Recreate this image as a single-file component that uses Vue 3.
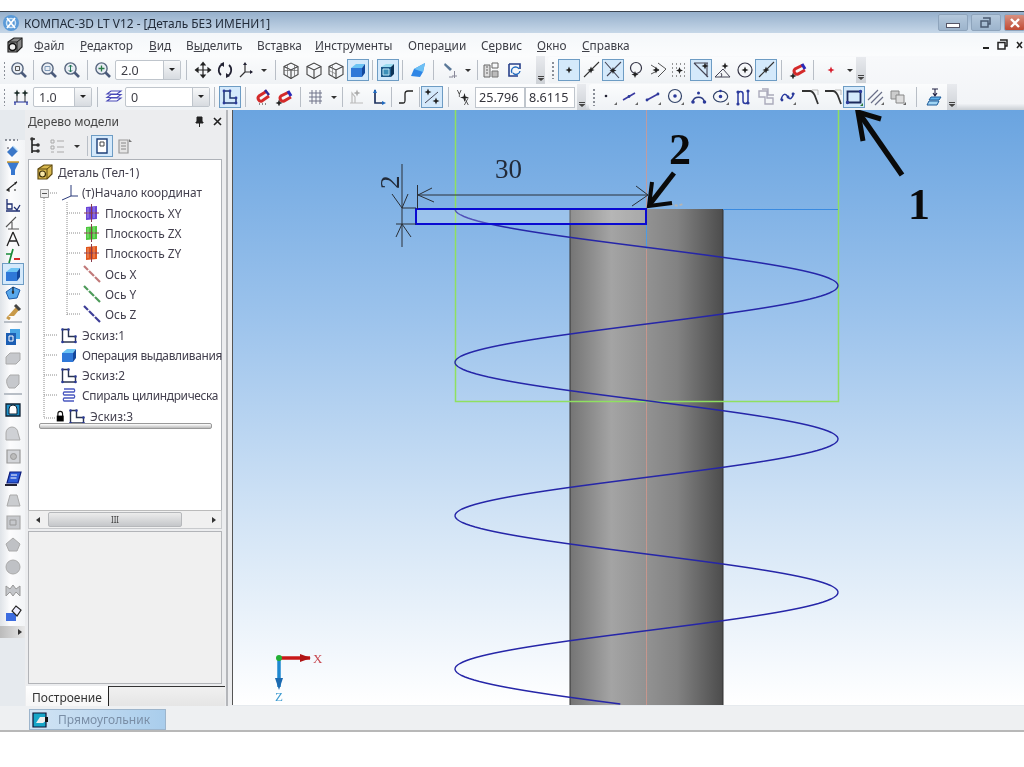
<script setup>
import { h } from 'vue'

const D = '#2a3550', B = '#2b3a9a'
const circle = (x, y, r) => `M${x - r} ${y}a${r} ${r} 0 1 0 ${r * 2} 0a${r} ${r} 0 1 0 ${-r * 2} 0z`
const dot = (x, y, c = B, r = 1.4) => [circle(x, y, r), 'none', c, 0]
const star = (x, y, c = '#222') => [`M${x} ${y - 3.5}L${x + 1} ${y - 1}L${x + 3.5} ${y}L${x + 1} ${y + 1}L${x} ${y + 3.5}L${x - 1} ${y + 1}L${x - 3.5} ${y}L${x - 1} ${y - 1}z`, 'none', c, 0]
const corner = ['M17 14v3h-3z', 'none', '#666', 0]
const lens = (x = 7.5, y = 7.5) => [[circle(x, y, 5.6), '#56657e', '#e8edf4', 1.4], [`M${x + 4} ${y + 4}l4.5 4.5`, '#4a5a7a', 'none', 2.6]]
const wire = [['M2 5.500l7-3.500 7 3.500v8l-7 4-7-4z', '#444', 'none', 1.1], ['M2 5.500l7 3.500 7-3.500M9 9v8.500', '#444', 'none', 1.1]]
const sketch = [['M2.5 16V3.5h6v7h7V16z', D, 'none', 1.4], dot(2.5, 16, B, 1.3), dot(2.5, 3.5, B, 1.3), dot(8.5, 3.5, B, 1.3), dot(15.5, 10.5, B, 1.3), dot(15.5, 16, B, 1.3)]
const cube = [['M2 7l5-4h9l-3 4z', 'none', '#6cc4f4', 0], ['M2 7h11v9H2z', 'none', '#2f78d8', 0], ['M13 7l3-4v9l-3 4z', 'none', '#14489c', 0]]
const plane = (c) => [['M3 3l11-1v13l-11 1z', 'none', c, 0], ['M8.5 0v18M1 9h15', '#8a3c4c', 'none', 1], ['M5 4v10M11 3v11', '#ffffff66', 'none', 1]]
const axis = (c) => [['M1 1L17 17', c, 'none', 2.2], ['M5 5l1 1M11 11l1 1', '#fff', 'none', 3]]
const icons = {
  zoomAll: [...lens(), ['M5.500 5.500h4v4h-4z', '#555', 'none', 1]],
  zoomWin: [...lens(), ['M5 5.500h5v4H5z', '#7f9ab8', 'none', 1]],
  zoomUd: [...lens(), ['M7.500 4v7M5.800 5.800l1.700-1.800 1.700 1.800M5.800 9.200l1.700 1.800 1.700-1.800', '#275', 'none', 1]],
  zoomPlus: [...lens(), ['M7.500 4.500v6M4.500 7.500h6', '#2a7a48', 'none', 1.3]],
  pan: [['M9 1.500v15M1.500 9h15M9 1.500L7 4h4zM9 16.500L7 14h4zM1.500 9L4 7v4zM16.500 9L14 7v4z', '#222', '#222', 1.2]],
  rot: [['M7 3a6.500 6.500 0 0 0-2 11', '#223', 'none', 1.7], ['M11 15a6.500 6.500 0 0 0 2-11', '#223', 'none', 1.7], ['M8 1v5L4 3zM10 17v-5l4 3z', 'none', '#223', 0]],
  axes: [['M8 3v8M8 11l-5 5M8 11h7', '#333', 'none', 1.2], ['M8 1l-2 3h4zM16 11l-3-2v4z', 'none', '#223', 0]],
  wire1: [...wire, ['M5.500 3.800v12M12.500 3.800v12M2 9.500h14', '#666', 'none', .7]],
  wire2: wire,
  wire3: [...wire, ['M5.500 3.800v12M2 9.500l7 3.500', '#777', 'none', .7]],
  cube,
  cubeDark: [['M2 6l5-3h8l-3 3z', 'none', '#9cdcf0', 0], ['M2 6h10v10H2z', 'none', '#1c5a8a', 0], ['M12 6l3-3v10l-3 3z', 'none', '#0e3458', 0], ['M4 8h6v6H4z', '#bfe6f5', '#3d8fb8', 1]],
  flat: [['M2 15l3-7 11-6-2 9-3 5z', 'none', '#2f86e6', 0], ['M5 8l11-6-2 9-9-3', 'none', '#6cc0f4', 0]],
  lamp: [['M4 2l7 6-2 2-6-6z', 'none', '#5a7898', 0], ['M11 15h5M13.500 10v7M8 16h4', '#889', 'none', 1]],
  book: [['M2 4h6v12H2z', '#666', '#ddd', 1], ['M4 6h2M4 9h2M4 12h2M10 2h6v5h-6z', '#666', 'none', 1], ['M10 10h6v6h-6z', '#777', '#bbb', 1]],
  refresh: [['M3 3h11v5', '#27408a', 'none', 1.6], ['M3 3v12h9', '#27408a', 'none', 1.6], ['M6 12a4 4 0 0 1 7-4M14 10a4 4 0 0 1-7 2', '#1f6ac0', 'none', 1.4]],
  snap1: [star(9, 9)],
  snap2: [['M2 16L17 1', '#333', 'none', 1.1], star(9, 9)],
  snap3: [['M1 1L15 17M17 1L3 15', '#445', 'none', 1.1], star(9, 9.500)],
  snap4: [[circle(9, 7, 5.500), '#334', 'none', 1.2], star(8, 13.500)],
  snap5: [['M2 4l8 5-8 4M9 2l8 6-8 8', '#555', 'none', 1], star(7, 9)],
  snap6: [['M2 3h1M6 3h1M10 3h1M14 3h1M2 7h1M6 7h1M14 7h1M2 11h1M14 11h1M2 15h1M6 15h1M10 15h1M14 15h1', '#333', 'none', 1.2], star(9.500, 9.500)],
  snap7: [['M2 2h14M2 2l14 14M15 2v14', '#445', 'none', 1.1], star(13, 5)],
  snap8: [['M1 16h15L9 8zM7 16a3 3 0 0 0 0-4', '#445', 'none', 1], star(11, 5)],
  snap9: [[circle(9, 9, 7), '#334', 'none', 1.2], star(9, 9)],
  magnet: [['M14 4L6 8a3 3 0 0 0 3 5l7-4', '#d42a2a', 'none', 3], ['M13 3l3 5', '#2a2ab8', 'none', 3], star(4, 15)],
  redstar: [star(9, 9, '#d81e2e')],
  point: [dot(6, 8, '#223', 1.3), corner],
  seg1: [['M2 12L14 5', '#3a3aa0', 'none', 1.6], dot(8, 8.500), corner],
  seg2: [['M3 12L14 6', '#3a3aa0', 'none', 1.6], dot(3, 12), dot(14, 6), corner],
  circ: [[circle(8, 8, 6.500), '#33446a', 'none', 1.2], dot(8, 8, B, 1.8), corner],
  arc: [['M2.500 14a6.200 6.200 0 0 1 12 0', '#2c3a80', 'none', 1.5], dot(3, 14, B, 1.8), dot(14.500, 14, B, 1.8), dot(8.500, 5, B, 1.5)],
  ell: [['M8.500 3a7 5.500 0 1 0 .1 0z', '#33446a', 'none', 1.2], dot(8.500, 8.500, B, 1.8), dot(8.500, 3, B, 1.3), corner],
  spline: [['M4 16V6a2.500 2.500 0 0 1 5 0v7a2.500 2.500 0 0 0 5 0V3', '#2a3aa0', 'none', 1.5], dot(4, 4, B, 1.6), dot(4, 16, B, 1.6), dot(14, 3, B, 1.6), dot(14, 15, B, 1.6)],
  offset: [['M2 3h8v7h6v6H8V9H2zM5 1h6v6h6', '#aab', 'none', 1.4]],
  wave: [['M2 12c2-8 5-6 7-3s4 2 6-4', '#2a3aa0', 'none', 1.5], dot(3, 12), dot(9, 9), dot(14, 6), corner],
  fillet: [['M1 3h8c3 0 4 3 5 5l3 8', '#333', 'none', 1.8], ['M11 2h6v5', '#aaa', 'none', .8]],
  rect: [['M2.500 3.500h13v11h-13z', '#1c2a5c', 'none', 1.8], dot(2.500, 14.500, B, 1.7), dot(15.500, 3.500, B, 1.7), ['M18 15v3h-3z', 'none', '#2a7a3a', 0]],
  hatch: [['M1 12L11 2M4 15L15 4M8 17L16 9', '#6a6f88', 'none', 1.2], corner],
  copy: [['M2 3h8v8H2z', '#888', '#ccc', 1], ['M7 7h8v8H7z', '#888', '#ddd', 1], corner],
  press: [['M9 1v6M6 1h6M7 5l2 3 2-3', '#224', 'none', 1.1], ['M5 9h10l-2 3H3z', '#1c5a98', '#5cb0ea', 1], ['M3 13h10l-2 4H1z', '#1c5a98', '#a0d4f4', 1]],
  params: [['M2 14h14M3 14v3M15 14v3', '#1d2d9a', 'none', 1.2], ['M5 7v7M13 7v7', '#333', 'none', 1], star(5, 5, '#1d2d2a'), star(13, 5, '#1d2d2a')],
  layers: [['M2 13l4-3h10l-4 3zM2 9.500l4-3h10l-4 3zM2 6l4-3h10l-4 3z', '#4a4ab8', '#fff', 1.1]],
  sketchSel: [['M3 15V3h6v7h6v5z', '#1c3570', 'none', 1.5], dot(3, 15), dot(3, 3), dot(9, 3), dot(15, 10), dot(15, 15)],
  mag1: [['M15 3L7 8a3 3 0 0 0 3 5l7-5', '#d42a2a', 'none', 3], ['M13 2l4 5', '#2a2a98', 'none', 2.400], ['M7 16h1M10 16h1M13 16h1', '#222', 'none', 1.2]],
  grid: [['M2 5h13M2 9h13M2 13h13M5 2v14M9 2v14M13 2v14', '#70758a', 'none', 1]],
  pin: [['M3 15h13M5 15V5l3 4v6', '#bbb', 'none', 1.2], star(10, 5, '#aaa')],
  lc: [['M6 2v13h9', '#1f3360', 'none', 1.7], ['M6 1L4 5h4zM17 15l-4-2v4z', 'none', '#1f6ac0', 0]],
  step: [['M2 15h4c2 0 2-1 2-3V6c0-2 1-3 3-3h5', '#222', 'none', 1.3]],
  snapSel: [['M2 15l13-11', '#445', 'none', 1], star(5, 4), star(13, 13)],
  model: [['M2 6l6-4h8v9l-5 5H2z', '#5f4a10', '#d8b84e', 1.2], ['M2 6h9v10M11 6l5-4', '#5f4a10', 'none', 1], [circle(6.500, 11, 3), '#3a2e0a', '#f7e7a8', 1.2]],
  modelDark: [['M2 6l6-4h8v9l-5 5H2z', '#222', '#888', 1.2], ['M2 6h9v10M11 6l5-4', '#222', 'none', 1], [circle(6.500, 11, 3.500), '#111', '#eee', 1.5]],
  treeA: [['M4 2v14M4 2h3M4 8h5M4 14h5', '#222', 'none', 1.6], dot(4, 2, '#333', 1.8), dot(10, 8, '#333', 1.8), dot(10, 14, '#333', 1.8)],
  treeB: [['M2 3h3v3H2zM2 9h3v3H2zM2 15h3', '#aaa', 'none', 1], ['M8 4h7M8 10h7M8 15h7', '#aaa', 'none', 1.2]],
  pageA: [['M4 2h10v14H4z', '#1c3f78', '#fff', 1.4], ['M7 5h4v4H7z', '#444', 'none', 1]],
  pageB: [['M3 3h9v13H3z', '#999', '#e5e5e5', 1.2], ['M5 6h5M5 9h5M5 12h5', '#888', 'none', 1], ['M13 2l3 3h-3z', 'none', '#777', 0]],
  origin: [['M11 2v11L2 17M11 13h7', '#2b3a7a', 'none', 1]],
  planeV: plane('#6a44d8'), planeG: plane('#4cc83c'), planeO: plane('#e0561c'),
  axR: axis('#c07878'), axG: axis('#4c9a58'), axB: axis('#3c3c96'),
  sketch,
  spiral: [['M4 3h10a2 2 0 0 1 0 3H4a2 2 0 0 0 0 3h10a2 2 0 0 1 0 3H4a2 2 0 0 0 0 3h10', '#4a58c0', 'none', 1.3]],
  lock: [['M5 9V6a3 3 0 0 1 6 0v3', '#111', 'none', 1.5], ['M3.500 8.500h9V16h-9z', 'none', '#000', 0]],
  s1: [['M3 9l6-6 5 5-6 6z', 'none', '#3c78c8', 0], ['M9 3l5 5', '#bfe0f8', 'none', 1.4], dot(4, 5, '#223', .8)],
  s2: [['M9 2l6 0-4 8v5H7v-5L3 2z', 'none', '#3878d0', 0], ['M3 2h12', '#cf9a2a', 'none', 1.5]],
  s3: [['M3 12l10-8M3 12l2-1v2zM13 4l-2 1 1 1', '#222', 'none', 1.1], dot(11, 12, '#666', 1)],
  s4: [['M3 3v10h5v-5H3M2 15h14M10 11l3 3 3-5', '#1d2d70', 'none', 1.3]],
  s5: [['M2 14l10-10M4 16h11M8 9v7', '#555', 'none', 1.1]],
  s6: [['M9 2L3 16M9 2l6 14M5 11h8', '#222', 'none', 1.3]],
  s7: [['M2 7h5M9 2L5 16', '#1a8a3a', 'none', 1.7], ['M10 12h6', '#d42a2a', 'none', 2]],
  s9: [['M2 9l7-5 7 3-3 8-8 1z', '#1c5aa8', '#58a8ec', 1], ['M9 4v7', '#123', 'none', 1.2], dot(9, 9, '#333', 1.3)],
  s10: [['M4 14l8-9 3 3-5 6z', 'none', '#c89a4a', 0], ['M11 3l5 5', '#444', 'none', 3], ['M3 15l3 2', '#c89a4a', 'none', 3]],
  o1: [['M2 5h10v12H2z', 'none', '#1d5fb4', 0], ['M6 1h10v10h-4V5H6z', 'none', '#49a6e6', 0], ['M5 8h4v5H5z', '#fff', 'none', 1]],
  g1: [['M2 8l4-4h10v7l-4 4H2z', '#aaa', '#c6c8cc', 1]],
  g2: [['M6 3h9v9l-4 4H5c-2-3-3-6-2-9z', '#aaa', '#c6c8cc', 1]],
  c1: [['M2 3h14v12H2z', '#123', '#1e90c8', 1.3], ['M5 13V8a4 4 0 0 1 8 0v5z', '#123', '#fff', 1]],
  c2: [['M2 15V8a6 6 0 0 1 12 0l2 7z', '#aaa', '#cfd1d5', 1]],
  c3: [['M3 3h13v13H3z', '#999', '#d2d4d8', 1.2], [circle(9.500, 9.500, 3), '#999', '#bbb', 1]],
  c4: [['M3 14l3-11h11l-3 11z', '#0f1e7c', '#2b5ad6', 1.2], ['M7 6h6M6.500 9h6', '#fff', 'none', 1], ['M1 16h12', '#223', 'none', 2]],
  c5: [['M3 15l3-11h7l3 11z', '#aaa', '#cacccf', 1]],
  c6: [['M3 3h13v13H3z', '#aaa', '#c6c8cc', 1.2], ['M6 7h6v5H6z', '#999', 'none', 1]],
  c7: [['M2 9l7-6 7 6-3 7H5z', '#aaa', '#bfc1c5', 1]],
  c8: [[circle(9, 9, 7), '#aaa', '#bfc1c5', 1]],
  c9: [['M2 15V5l4 3 3-4 3 4 4-3v10l-4-4-3 4-3-4z', '#999', '#c3c5c9', 1]],
  c10: [['M2 9h10v8H2z', 'none', '#3c6ce0', 0], ['M8 7l4-5 5 4-4 6z', '#222', '#eef', 1.2]],
  statusIc: [['M2 2h13v14H2z', '#113', '#18a6c8', 1.2], ['M5 12l4-6h6l1 3-4 3z', 'none', '#eee', 0], ['M14 6h3v5h-3z', 'none', '#111', 0]],
}
const Icon = (p) => h('svg', { width: p.s || 18, height: p.s || 18, viewBox: '0 0 18 18', style: { display: 'block', flex: 'none' } },
  (icons[p.n] || []).map(([d, stroke, fill, sw]) => h('path', { d, stroke, fill, 'stroke-width': sw })))
Icon.props = ['n', 's']

const t = (w, i, sel) => ({ k: 'i', w, i, sel })
const sep = (w = 8) => ({ k: 's', w })
const drop = (w = 12) => ({ k: 'd', w })
const grip = (w = 10) => ({ k: 'g', w })
const gap = (w) => ({ k: 'x', w })
const combo = (w, v) => ({ k: 'c', w, v })
const input = (w, v) => ({ k: 'n', w, v })
const tail = (w = 10) => ({ k: 't', w })

const rowA1 = [grip(9), t(20, 'zoomAll'), sep(8), t(23, 'zoomWin'), t(23, 'zoomUd'), sep(8), t(24, 'zoomPlus'), combo(66, '2.0'), sep(10), t(24, 'pan'), t(20, 'rot'), t(22, 'axes'), drop(14), sep(8), t(24, 'wire1'), t(22, 'wire2'), t(22, 'wire3'), t(21, 'cube', 1), sep(9), t(21, 'cubeDark', 1), sep(9), t(22, 'flat'), sep(9), t(23, 'lamp'), drop(13), sep(7), t(20, 'book'), t(27, 'refresh'), gap(8), tail(9)]
const rowA2 = [grip(10), t(22, 'snap1', 1), t(22, 'snap2'), t(22, 'snap3', 1), t(23, 'snap4'), t(21, 'snap5'), t(22, 'snap6'), t(22, 'snap7', 1), t(22, 'snap8'), t(21, 'snap9'), t(22, 'snap2', 1), sep(9), t(23, 'magnet'), sep(8), t(27, 'redstar'), drop(12), tail(10)]
const rowB1 = [grip(9), t(24, 'params'), combo(59, '1.0'), sep(10), t(23, 'layers'), combo(85, '0'), sep(9), t(22, 'sketchSel', 1), sep(8), t(23, 'mag1'), t(23, 'magnet'), sep(10), t(22, 'grid'), drop(14), sep(2), t(25, 'pin'), t(20, 'lc'), sep(7), t(22, 'step'), sep(4), t(22, 'snapSel', 1), sep(11), { k: 'y', w: 21 }, input(50, '25.796'), input(50, '8.6115'), gap(2), tail(9)]
const rowB2 = [grip(10), t(20, 'point'), t(22, 'seg1'), t(23, 'seg2'), t(23, 'circ'), t(23, 'arc'), t(21, 'ell'), t(24, 'spline'), t(22, 'offset'), t(21, 'wave'), t(24, 'fillet'), t(22, 'fillet'), t(20, 'rect', 1), t(23, 'hatch'), t(22, 'copy'), sep(14), t(24, 'press'), tail(10)]

const menu = [['', 'Ф', 'айл', 46], ['', 'Р', 'едактор', 69], ['', 'В', 'ид', 37], ['В', 'ы', 'делить', 71], ['Вст', 'а', 'вка', 58], ['', 'И', 'нструменты', 93], ['Опера', 'ц', 'ии', 73], ['С', 'е', 'рвис', 56], ['', 'О', 'кно', 45], ['', 'С', 'правка', 70]]

const strip = [['s1', 16], ['s2', 18], ['s3', 18.5], ['s4', 17], ['s5', 16.5], ['s6', 17.5], ['s7', 17.5], ['cube', 17.5, 1], ['s9', 18.5], ['s10', 19], null, ['o1', 21.5], ['g1', 21.5], ['g2', 23], null, ['c1', 24], ['c2', 23], ['c3', 21.5], ['c4', 22.5], ['c5', 22.5], ['c6', 21.5], ['c7', 22], ['c8', 23.5], ['c9', 23], ['c10', 23.5]]

const tree = [
  { x: 30, i: 'model', label: 'Деталь (Тел-1)' },
  { x: 54, i: 'origin', label: '(т)Начало координат' },
  { x: 77, i: 'planeV', label: 'Плоскость XY' },
  { x: 77, i: 'planeG', label: 'Плоскость ZX' },
  { x: 77, i: 'planeO', label: 'Плоскость ZY' },
  { x: 77, i: 'axR', label: 'Ось X' },
  { x: 77, i: 'axG', label: 'Ось Y' },
  { x: 77, i: 'axB', label: 'Ось Z' },
  { x: 54, i: 'sketch', label: 'Эскиз:1' },
  { x: 54, i: 'cube', label: 'Операция выдавливания', tight: true },
  { x: 54, i: 'sketch', label: 'Эскиз:2' },
  { x: 54, i: 'spiral', label: 'Спираль цилиндрическа', tight: true },
  { x: 62, i: 'sketch', label: 'Эскиз:3', lock: true },
]

const treeDots = 'M15 38V258M38 42V155' + [53, 73, 93, 114, 134, 154].map(y => `M38 ${y}h14`).join('') + [175, 195, 215, 235].map(y => `M15 ${y}h14`).join('') + 'M19 33h10M15 258h12'

const helix = (() => {
  const pts = []
  for (let y = 210; y <= 705; y += 1.5) {
    const x = 646.5 - 191.5 * Math.cos(Math.PI * (y - 210) / 76.67)
    pts.push(`${x.toFixed(1)} ${y}`)
  }
  return 'M' + pts.join('L')
})()
</script>

<template>
  <div class="page">
    <div class="top"></div>
    <div class="title">
      <svg class="logo" width="18" height="18" viewBox="0 0 18 18"><circle cx="9" cy="9" r="8" fill="#5a9ad8"/><circle cx="9" cy="9" r="4.500" fill="none" stroke="#cfe4f6" stroke-width="1.5"/><path d="M5 4l4 5-4 5M13 4L9 9l4 5" stroke="#fff" stroke-width="1.8" fill="none"/></svg>
      <span class="title-text">КОМПАС-3D LT V12 - [Деталь БЕЗ ИМЕНИ1]</span>
      <div class="winbtns">
        <div class="wb"><span class="wb-min"></span></div>
        <div class="wb"><svg width="14" height="12" viewBox="0 0 14 12"><path d="M4 1h7v6H9M2 4h7v6H2z" fill="none" stroke="#4a5a70" stroke-width="1.5"/></svg></div>
        <div class="wb close"><svg width="12" height="12" viewBox="0 0 12 12"><path d="M2 2l8 8M10 2l-8 8" stroke="#fff" stroke-width="2.400"/></svg></div>
      </div>
    </div>

    <div class="menu">
      <div class="menu-ic"><Icon n="modelDark" :s="18" /></div>
      <div class="menu-list">
        <span v-for="m in menu" :key="m[1] + m[2]" class="mi" :style="{ width: m[3] + 'px' }">{{ m[0] }}<u>{{ m[1] }}</u>{{ m[2] }}</span>
      </div>
      <div class="mdi">
        <span class="mdi-min"></span>
        <svg width="11" height="11" viewBox="0 0 11 11"><path d="M3 1h7v6H8M1 3.500h7v6.500H1z" fill="none" stroke="#222" stroke-width="1.5"/></svg>
        <svg width="8" height="10" viewBox="0 0 8 10"><path d="M1 2l5 6M6 2L1 8" stroke="#222" stroke-width="1.5"/></svg>
      </div>
    </div>

    <div class="bars">
      <div v-for="(bar, bi) in [[rowA1, rowA2, 'h28', 'g2'], [rowB1, rowB2, 'h26', 'g3']]" :key="bi" class="bar" :class="bar[2]">
        <div v-for="(row, ri) in [bar[0], bar[1]]" :key="ri" class="group" :class="ri ? bar[3] : ''">
          <template v-for="(b, n) in row" :key="n">
            <span v-if="b.k === 'g'" class="grip" :style="{ width: b.w + 'px' }"></span>
            <span v-else-if="b.k === 's'" class="sep" :style="{ width: b.w + 'px' }"></span>
            <span v-else-if="b.k === 'x'" class="blank" :style="{ width: b.w + 'px' }"></span>
            <span v-else-if="b.k === 'd'" class="drop" :style="{ width: b.w + 'px' }"></span>
            <span v-else-if="b.k === 't'" class="tail" :style="{ width: b.w + 'px' }"></span>
            <span v-else-if="b.k === 'c'" class="combo" :style="{ width: b.w + 'px' }"><span class="cv">{{ b.v }}</span><span class="cb"></span></span>
            <span v-else-if="b.k === 'n'" class="numbox" :style="{ width: b.w + 'px' }">{{ b.v }}</span>
            <span v-else-if="b.k === 'y'" class="yx" :style="{ width: b.w + 'px' }"><span class="yx-y">Y</span><svg width="9" height="9" viewBox="0 0 9 9"><path d="M4.500 0l1 3.500 3.500 1-3.500 1-1 3.500-1-3.500-3.500-1 3.500-1z" fill="#222"/></svg><span class="yx-x">X</span></span>
            <span v-else class="cell" :style="{ width: b.w + 'px' }"><span class="tb" :class="{ on: b.sel }"><Icon :n="b.i" /></span></span>
          </template>
        </div>
      </div>
    </div>

    <div class="main">
      <div class="strip">
        <div class="strip-grip"></div>
        <template v-for="(b, n) in strip" :key="n">
          <div v-if="!b" class="strip-sep"></div>
          <div v-else class="strip-cell" :style="{ height: b[1] + 'px' }"><span class="tb" :class="{ on: b[2] }"><Icon :n="b[0]" /></span></div>
        </template>
        <div class="strip-end"><span class="se-arrow"></span></div>
      </div>

      <div class="panel">
        <div class="ptitle">
          <span>Дерево модели</span>
          <span class="pbtns">
            <svg width="9" height="11" viewBox="0 0 9 11"><path d="M2 1h5v5h1v1H1V6h1zM4.500 7v4" fill="#222" stroke="#222"/></svg>
            <svg width="9" height="9" viewBox="0 0 9 9"><path d="M1 1l7 7M8 1L1 8" stroke="#222" stroke-width="1.6"/></svg>
          </span>
        </div>
        <div class="ptools">
          <span class="cell pt1"><Icon n="treeA" /></span>
          <span class="cell pt2"><Icon n="treeB" /></span>
          <span class="drop pt3"></span>
          <span class="sep pt4"></span>
          <span class="cell pt5"><span class="tb on"><Icon n="pageA" /></span></span>
          <span class="cell pt2"><Icon n="pageB" /></span>
        </div>
        <div class="treebox">
          <svg class="tree-lines" width="192" height="300"><path :d="treeDots" stroke="#8c8c8c" stroke-dasharray="1 1" fill="none"/></svg>
          <svg class="tree-minus" width="9" height="9" viewBox="0 0 9 9"><path d="M.5.500h8v8h-8z" fill="#eee" stroke="#999"/><path d="M2 4.500h5" stroke="#555"/></svg>
          <div v-for="r in tree" :key="r.label" class="row" :style="{ paddingLeft: (r.x - 23) + 'px' }">
            <span v-if="r.lock" class="lock"><Icon n="lock" :s="14" /></span>
            <span class="row-ic"><Icon :n="r.i" /></span>
            <span class="row-t" :class="{ tight: r.tight }">{{ r.label }}</span>
          </div>
          <div class="thin"></div>
        </div>
        <div class="hscroll">
          <span class="ha left"></span>
          <span class="thumb"><span class="grips">III</span></span>
          <span class="ha right"></span>
        </div>
        <div class="props"></div>
        <div class="tabs"><span class="tab">Построение</span></div>
      </div>

      <svg class="view" viewBox="232 111 792 595" width="792" height="595" preserveAspectRatio="none">
        <defs>
          <linearGradient id="sky" x1="0" y1="0" x2="0" y2="1">
            <stop offset="0" stop-color="#6aa4e0"/>
            <stop offset=".35" stop-color="#9cc3ec"/>
            <stop offset=".7" stop-color="#d4e5f6"/>
            <stop offset="1" stop-color="#ffffff"/>
          </linearGradient>
          <linearGradient id="cyl" x1="0" y1="0" x2="1" y2="0">
            <stop offset="0" stop-color="#747474"/>
            <stop offset=".27" stop-color="#a4a4a4"/>
            <stop offset=".55" stop-color="#8e8e8e"/>
            <stop offset=".7" stop-color="#828282"/>
            <stop offset="1" stop-color="#4c4c4c"/>
          </linearGradient>
        </defs>
        <rect x="232" y="111" width="792" height="595" fill="url(#sky)"/>
        <path d="M232 111v595" stroke="#555" stroke-width="2"/>
        <rect x="570" y="210" width="153" height="496" fill="url(#cyl)"/>
        <path d="M570 210V706M723 210V706" stroke="#333" stroke-width="1"/>
        <path d="M455.500 111V402.500H838.500V111" fill="none" stroke="#8fe060" stroke-width="1.500"/>
        <path d="M646.500 111V706" stroke="#d8988c" stroke-width="1" opacity=".75"/>
        <path d="M646.500 210V250" stroke="#4a9ce8" stroke-width="1"/>
        <path d="M723 210.500H838" stroke="#3a8ae0" stroke-width="1.200"/>
        <path :d="helix" fill="none" stroke="#2626a8" stroke-width="1.400"/>
        <rect x="416" y="210" width="230" height="15" fill="#ffffff" fill-opacity=".2" stroke="#0a0ad2" stroke-width="2"/>
        <path d="M660 207c5-3 10-2 14-1s6 0 9-1" stroke="#b4b4b4" stroke-width="2" fill="none" stroke-dasharray="3 2"/>

        <g stroke="#2a3038" stroke-width="1" fill="none">
          <path d="M417.500 186V210M418 196H648M432 189L418 196L434 203M636 187L648 196L632 207"/>
          <path d="M402 165V248M402 209H416M396 225H416M392 195L402 209L408 195M396 238L402 225L411 238"/>
        </g>
        <text x="495" y="179" class="dim">30</text>
        <text x="0" y="0" class="dim" transform="translate(399 190) rotate(-90)">2</text>
        <text x="669" y="165" class="big">2</text>
        <text x="908" y="220" class="big">1</text>
        <path d="M674 174L650 205" stroke="#0a0a0a" stroke-width="5" fill="none"/>
        <path d="M652 183L649 207L672 204" stroke="#0a0a0a" stroke-width="4" fill="none"/>
        <path d="M902 176L859 114" stroke="#0a0a0a" stroke-width="5.500" fill="none"/>
        <path d="M863 142L858 113L881 120" stroke="#0a0a0a" stroke-width="5" fill="none"/>
        <path d="M279 659H310" stroke="#c81818" stroke-width="3.500"/>
        <path d="M300 655L311 659L300 663z" fill="#b01414"/>
        <path d="M279 659V688" stroke="#1e88d0" stroke-width="3.500"/>
        <path d="M275 679L279 691L283 679z" fill="#1c6ab0"/>
        <circle cx="279" cy="659" r="3" fill="#22b034"/>
        <text x="313" y="664" class="ax red">X</text>
        <text x="275" y="702" class="ax blue">Z</text>
      </svg>
    </div>

    <div class="status">
      <div class="st-tab"><Icon n="statusIc" :s="18" /><span>Прямоугольник</span></div>
    </div>
    <div class="bottom"></div>
  </div>
</template>

<style>
html, body { margin: 0; background: #fff; }
</style>

<style scoped>
.page { width: 1024px; height: 767px; display: flex; flex-direction: column; overflow: hidden; font-family: "Noto Sans", "Liberation Sans", sans-serif; font-size: 11.5px; color: #3a3a44; background: #fff; filter: blur(.35px); }
.top { height: 11px; flex: none; background: #fff; border-bottom: 1px solid #3c4550; }
.title { height: 21px; flex: none; display: flex; align-items: center; background: linear-gradient(#96b0cc, #c6d7e8); }
.logo { margin: 0 4px 0 2px; flex: none; }
.title-text { color: #222c3a; font-size: 11.9px; white-space: nowrap; }
.winbtns { margin-left: auto; display: flex; gap: 3px; align-items: flex-start; height: 100%; }
.wb { width: 30px; height: 17px; margin-top: 2px; border: 1px solid #8ea4bc; box-sizing: border-box; border-radius: 2px; background: linear-gradient(#b4c8dc, #9db4cc); display: flex; align-items: center; justify-content: center; }
.wb-min { width: 12px; height: 3px; border: 1px solid #556; background: #fff; margin-top: 5px; }
.close { width: 21px; margin-right: -1px; background: linear-gradient(#d89080, #c04a34); }
.menu { height: 23px; flex: none; display: flex; align-items: center; background: linear-gradient(#f4f7fa, #fbfcfd); }
.menu-ic { width: 34px; flex: none; padding-left: 6px; box-sizing: border-box; }
.menu-list { display: flex; white-space: nowrap; }
.mi { display: block; flex: none; color: #3f4048; font-size: 11.8px; }
.mdi { margin-left: auto; display: flex; align-items: center; gap: 8px; padding-right: 0; }
.mdi-min { width: 6px; height: 2px; background: #222; margin-top: 6px; }
.bars { flex: none; background: linear-gradient(#f8f9fb, #f2f4f7 88%, #c9ced4); }
.bar { display: flex; }
.h28 { height: 28px; }
.h26 { height: 26px; }
.group { display: flex; align-items: center; background: linear-gradient(#fbfcfd, #eff2f5); border-radius: 0 3px 3px 0; height: 100%; flex: none; }
.g2 { margin-left: 3px; border-radius: 3px; height: 26px; margin-top: 1px; }
.g3 { margin-left: 3px; border-radius: 3px; }
.cell { display: flex; justify-content: center; align-items: center; flex: none; height: 100%; }
.blank { height: 100%; flex: none; }
.tb { display: flex; align-items: center; justify-content: center; width: 20px; height: 20px; box-sizing: border-box; flex: none; }
.tb.on { width: 22px; height: 22px; background: #d4e9fb; border: 1px solid #6d9cc4; margin: 0 -2px; }
.grip { height: 18px; flex: none; background: radial-gradient(circle, #8a8f98 .8px, transparent 1px) center top / 100% 4px repeat-y; }
.sep { height: 20px; flex: none; background: linear-gradient(#b8bec6, #b8bec6) center / 1px 100% no-repeat; }
.drop { height: 100%; flex: none; position: relative; display: block; }
.drop::after { content: ""; position: absolute; left: 50%; top: 50%; margin: -1px 0 0 -3px; border: 3px solid transparent; border-top: 3px solid #333; border-bottom: 0; }
.tail { height: 100%; flex: none; background: linear-gradient(#e8eaee, #cdd1d6); position: relative; }
.tail::after { content: ""; position: absolute; left: 2px; bottom: 3px; width: 6px; height: 5px; background: linear-gradient(#444 0 1px, transparent 1px 2px, #444 2px); clip-path: polygon(0 0, 100% 0, 100% 50%, 50% 100%, 0 50%); }
.combo { height: 20px; box-sizing: border-box; border: 1px solid #bfc5cc; border-radius: 2px; background: #fff; display: flex; flex: none; align-items: center; }
.cv { flex: 1; padding-left: 5px; color: #3d3d45; font-size: 12.5px; }
.cb { width: 17px; height: 100%; background: linear-gradient(#f7f8f9, #d7dbe0); border-left: 1px solid #bfc5cc; box-sizing: border-box; position: relative; flex: none; }
.cb::after { content: ""; position: absolute; left: 5px; top: 7px; border: 3px solid transparent; border-top: 3px solid #222; border-bottom: 0; }
.numbox { height: 21px; box-sizing: border-box; border: 1px solid #bfc5cc; background: #fff; padding-left: 3px; line-height: 19px; font-size: 12.6px; white-space: nowrap; color: #34343c; flex: none; overflow: visible; }
.yx { height: 100%; flex: none; position: relative; display: flex; align-items: center; justify-content: center; font-size: 8px; color: #333; line-height: 1; }
.yx-y { position: absolute; left: 3px; top: 6px; }
.yx-x { position: absolute; left: 10px; bottom: 4px; }
.main { height: 596px; flex: none; display: flex; background: #e6eaee; }
.strip { width: 25px; flex: none; display: flex; flex-direction: column; align-items: center; background: linear-gradient(#e6eaee 0 30px, transparent 30px), linear-gradient(90deg, #dfe3e8, #fcfcfd 40%, #f2f4f6); padding-top: 34px; box-sizing: border-box; position: relative; height: 516px; }
.strip-grip { position: absolute; left: 4px; top: 29px; width: 14px; height: 2px; background: radial-gradient(circle, #8a8f98 .8px, transparent 1px) left / 4px 100% repeat-x; }
.strip-cell { display: flex; align-items: center; justify-content: center; width: 25px; flex: none; }
.strip-sep { height: 2px; width: 18px; background: #b8bec6; margin: 1px 0 3px; flex: none; }
.strip-end { height: 12px; width: 25px; background: linear-gradient(90deg, #bbb, #e8e8e8); margin-top: 1px; display: flex; justify-content: flex-end; align-items: center; flex: none; }
.se-arrow { border: 3px solid transparent; border-left: 4px solid #333; border-right: 0; margin-right: 3px; }
.panel { width: 207px; flex: none; display: flex; flex-direction: column; background: linear-gradient(90deg, #ecedef 201px, #b4b6ba 201px 203px, #ecedef 203px); }
.ptitle { height: 23px; flex: none; display: flex; align-items: center; justify-content: space-between; padding: 0 10px 0 3px; color: #444; font-size: 12px; box-sizing: border-box; }
.pbtns { display: flex; gap: 9px; align-items: center; }
.ptools { height: 26px; flex: none; display: flex; align-items: center; padding-left: 3px; }
.pt1 { width: 18px; }
.pt2 { width: 24px; }
.pt3 { width: 13px; }
.pt4 { width: 8px; }
.pt5 { width: 22px; }
.treebox { height: 351px; flex: none; margin: 0 10px 0 3px; background: #fff; border: 1px solid #aeb2b8; border-bottom: 0; box-sizing: border-box; position: relative; padding-top: 2px; }
.tree-lines { position: absolute; left: 0; top: 0; }
.tree-minus { position: absolute; left: 11px; top: 29px; }
.row { height: 20.3px; display: flex; align-items: center; position: relative; white-space: nowrap; }
.row-ic { width: 22px; flex: none; display: block; }
.row-t { color: #43404e; font-size: 11.9px; }
.row-t.tight { letter-spacing: -.32px; }
.lock { position: absolute; left: 25px; top: 3px; }
.thin { height: 4px; width: 171px; margin: -3px 0 0 10px; position: relative; border: 1px solid #999; border-radius: 2px; background: linear-gradient(#fff, #bbb); }
.hscroll { height: 19px; margin: 0 10px 0 3px; flex: none; display: flex; align-items: center; background: #f0f0f0; border: 1px solid #c8cacd; border-top: 1px solid #bbb; box-sizing: border-box; }
.ha { width: 18px; flex: none; display: flex; height: 0; box-sizing: border-box; }
.ha.left { border: 3px solid transparent; border-right: 4px solid #333; border-left: 0; width: 0; margin: 0 8px 0 7px; height: 6px; }
.ha.right { border: 3px solid transparent; border-left: 4px solid #333; border-right: 0; width: 0; margin: 0 5px 0 auto; height: 6px; }
.thumb { width: 134px; height: 15px; flex: none; background: linear-gradient(#ececec, #c5c7ca); border: 1px solid #b6b8bb; box-sizing: border-box; border-radius: 2px; display: flex; align-items: center; justify-content: center; }
.grips { font-size: 8px; color: #444; letter-spacing: 0; line-height: 1; }
.props { height: 153px; flex: none; margin: 2px 10px 0 3px; background: #f0f0f0; border: 1px solid #b2b4b8; box-sizing: border-box; }
.tabs { height: 21px; flex: none; border-top: 1px solid #333; margin: 2px 7px 0 1px; display: flex; background: linear-gradient(#f0f0f0, #e4e4e4); }
.tab { width: 83px; height: 21px; margin-top: -1px; box-sizing: border-box; background: linear-gradient(#fff, #f6f6f6); border-right: 1px solid #222; border-bottom: 1px solid #222; padding: 3px 0 0 6px; color: #333; font-size: 12px; }
.view { display: block; flex: none; }
.dim { font-family: "Liberation Serif", serif; font-size: 27px; fill: #222a38; }
.big { font-family: "Liberation Serif", serif; font-weight: 700; font-size: 44px; fill: #0a0a0a; }
.ax { font-family: "Liberation Serif", serif; font-size: 13px; }
.red { fill: #c84850; }
.blue { fill: #3c9ad0; }
.status { height: 24px; flex: none; background: #eef0f2; display: flex; align-items: flex-end; padding-left: 29px; border-bottom: 2px solid #b8b8b8; box-sizing: content-box; }
.st-tab { width: 137px; height: 21px; box-sizing: border-box; border: 1px solid #9db5cc; background: linear-gradient(90deg, #d2e4f4, #a9cdec); display: flex; align-items: center; padding-left: 1px; gap: 9px; }
.st-tab span { color: #7a8ea6; font-size: 12px; }
.bottom { flex: 1; background: #fff; }
</style>
